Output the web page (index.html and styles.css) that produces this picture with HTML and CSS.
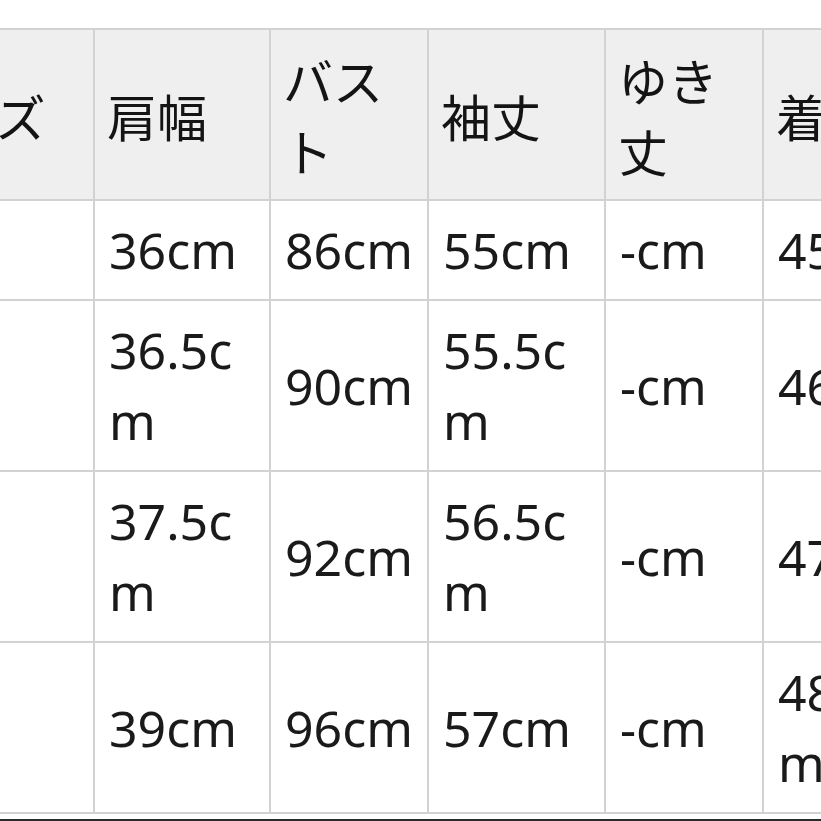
FILE: index.html
```html
<!DOCTYPE html>
<html lang="ja">
<head>
<meta charset="utf-8">
<title>サイズ表</title>
<link rel="stylesheet" href="styles.css">
</head>
<body>
<div class="page">
  <table class="size-table">
    <thead>
      <tr>
        <th class="c0">サイズ</th>
        <th class="c1">肩幅</th>
        <th class="c2">バスト</th>
        <th class="c3">袖丈</th>
        <th class="c4">ゆき丈</th>
        <th class="c5">着丈</th>
      </tr>
    </thead>
    <tbody>
      <tr>
        <td>S</td><td>36cm</td><td>86cm</td><td>55cm</td><td>-cm</td><td>45cm</td>
      </tr>
      <tr>
        <td>M</td><td>36.5cm</td><td>90cm</td><td>55.5cm</td><td>-cm</td><td>46cm</td>
      </tr>
      <tr>
        <td>L</td><td>37.5cm</td><td>92cm</td><td>56.5cm</td><td>-cm</td><td>47cm</td>
      </tr>
      <tr>
        <td>XL</td><td>39cm</td><td>96cm</td><td>57cm</td><td>-cm</td><td>48.5cm</td>
      </tr>
    </tbody>
  </table>
  <div class="bottom-rule"></div>
</div>
</body>
</html>
```

FILE: styles.css
```css
html, body {
  margin: 0;
  padding: 0;
  background: #ffffff;
  overflow: hidden;
  width: 821px;
  height: 821px;
}

.page {
  padding-top: 28px;
  font-family: "Noto Sans", "Noto Sans CJK JP", sans-serif;
  color: #141414;
}

.size-table {
  margin-left: -117px;
  border-collapse: separate;
  border-spacing: 0;
  table-layout: fixed;
  width: 1055px;
  border-top: 2px solid #d2d2d2;
  border-left: 2px solid #d2d2d2;
  font-size: 50px;
  line-height: 71px;
}

.size-table th,
.size-table td {
  box-sizing: border-box;
  padding: 14px 10px 13px 12px;
  border-right: 2px solid #d2d2d2;
  border-bottom: 2px solid #d2d2d2;
  text-align: left;
  vertical-align: middle;
  font-weight: normal;
  word-break: break-all;
}

.size-table th {
  background: #efefef;
  font-family: "Noto Sans CJK JP", sans-serif;
}

.size-table td {
  padding-left: 14px;
  color: #1a1a1a;
}

.c0 { width: 210px; }
.c1 { width: 176px; }
.c2 { width: 158px; }
.c3 { width: 177px; }
.c4 { width: 158px; }
.c5 { width: 176px; }

.bottom-rule {
  margin-top: 5px;
  height: 2px;
  background: #2a2a2a;
}
```
